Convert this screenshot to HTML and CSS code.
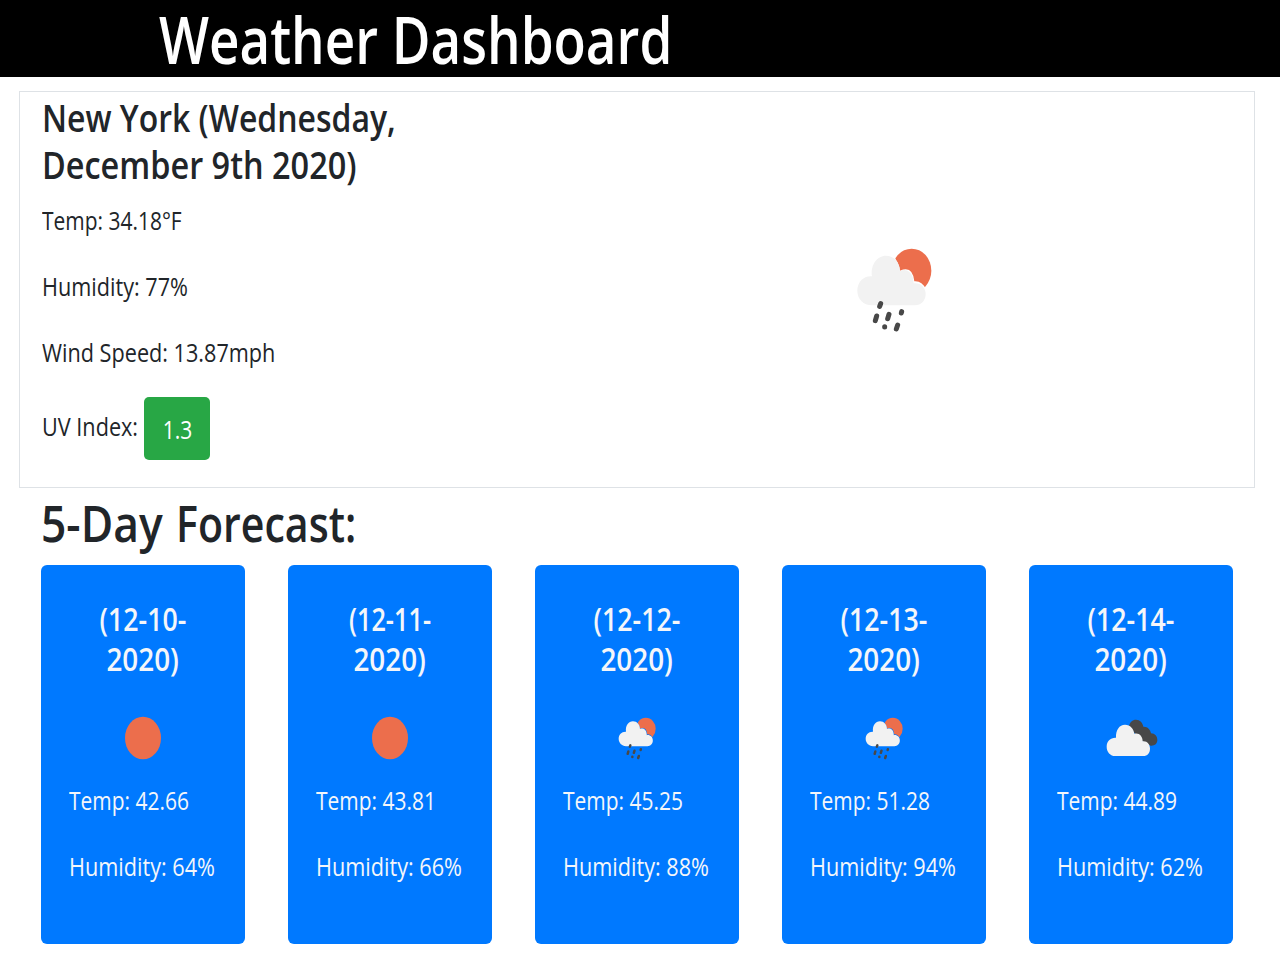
FILE: index.html
```html
<!DOCTYPE html>
<html lang="en">
<head>
<meta charset="utf-8">
<title>Weather Dashboard</title>
<link rel="stylesheet" href="styles.css">
</head>
<body>
<svg class="defs" width="0" height="0">
  <symbol id="rain" viewBox="0 0 330 330">
    <ellipse cx="215" cy="107" rx="59" ry="66" fill="#ec6e4c"/>
    <path class="bg-cut" d="M150 50Q178 82 180 107Q218 90 223 139Q246 137 257 162V182H140Z"/>
    <path d="M96 211C70 211 52 191 52 167C52 141 71 122 96 124C91 90 111 62 138 62C162 62 179 81 180 108C202 98 221 115 221 145C241 142 257 157 257 177C257 197 243 211 225 211Z" fill="#f2f2f2"/>
    <g stroke="#484848" stroke-width="15" stroke-linecap="round"><path d="M122 206L119 214M110 243L106 257M147 238L143 251M185 230L184 234M134 275L134 276M173 270L169 282"/></g>
  </symbol>
  <symbol id="sun" viewBox="0 0 55 55"><ellipse cx="27" cy="27" rx="18" ry="21.3" fill="#ec6e4c"/></symbol>
  <symbol id="clouds" viewBox="0 0 240 210">
    <path d="M117 78C120 66 127 59 138 59C150 59 158 68 160 80C172 79 181 88 183 100C195 100 202 109 202 120C202 131 194 138 182 137L150 120Z" fill="#484848"/>
    <path d="M76 168C61 168 50 156 50 140C50 123 62 112 78 113C77 90 88 74 105 74C121 74 131 86 133 101C147 97 158 108 158 124C171 122 180 133 180 146C180 159 172 168 160 168Z" fill="#f2f2f2"/>
  </symbol>
</svg>
<header class="topbar"><h1><span class="fit fit-title">Weather Dashboard</span></h1></header>
<main class="content">
  <section class="current">
    <div class="details">
      <h2><span class="fit fit-city">New York (Wednesday,</span><br><span class="fit fit-date">December 9th 2020)</span></h2>
      <p><span class="fit fit-temp">Temp: 34.18°F</span></p>
      <p><span class="fit fit-text">Humidity: 77%</span></p>
      <p><span class="fit fit-text">Wind Speed: 13.87mph</span></p>
      <div class="uv"><span class="uv-label"><span class="fit fit-text">UV Index:</span></span><span class="badge"><span class="fit">1.3</span></span></div>
    </div>
    <div class="picture"><svg width="110" height="110"><use href="#rain"/></svg></div>
  </section>
  <h2 class="forecast-title"><span class="fit fit-day">5-Day</span> <span class="fit fit-forecast">Forecast:</span></h2>
  <section class="cards" id="cards"></section>
</main>
<script src="script.js"></script>
</body>
</html>
```
FILE: styles.css
```css
* { box-sizing: border-box; }
body { margin: 0; background: #fff; color: #212529; font: 25px/40px "Open Sans", "Noto Sans", sans-serif; }
h1, h2, h3, p { margin: 0; }
.defs { display: block; }
.bg-cut { fill: var(--surface, #fff); }

/* Condensed text widths */
.fit { display: inline-block; white-space: nowrap; transform-origin: left center; }
.fit-title { transform: scaleX(.814); }
.fit-city { transform: scaleX(.83); }
.fit-date { transform: scaleX(.843); }
.fit-temp { transform: scaleX(.838); }
.fit-text { transform: scaleX(.866); }
.fit-day { width: 135px; transform: scaleX(.87); }
.fit-forecast { transform: scaleX(.806); }

.topbar { height: 77px; background: #000; color: #fff; padding-left: 159px; }
.topbar h1 { font-size: 65px; line-height: 79px; font-weight: 600; }
.content { padding: 14px 25px 0 19px; }
.current { display: flex; height: 397px; border: 1px solid #dee2e6; padding: 2px 22px; }
.details { width: 500px; }
.details h2 { font-size: 38.5px; line-height: 47px; font-weight: 600; margin-bottom: 12px; }
.details p { margin-bottom: 26px; }
.uv { display: flex; gap: 6px; margin-top: -1px; }
.uv-label { width: 96px; padding-top: 9px; }
.badge { width: 66px; height: 63px; margin-top: .4px; background: #28a745; color: #fff; border-radius: 5px; text-align: center; line-height: 65px; padding-left: 1px; }
.badge .fit { transform: scaleX(.84); transform-origin: center; }
.picture { padding: 141px 0 0 298px; }
.forecast-title { display: flex; font-size: 51px; line-height: 68px; font-weight: 600; padding-left: 22px; height: 77px; }
.cards { display: grid; grid-template-columns: repeat(5, 204px); column-gap: 43px; padding-left: 22px; }
.card { --surface: #0079ff; height: 379px; background: #0079ff; color: #f4f6fa; border-radius: 6px; padding: 34px 28px 0; }
.card h3 { font-size: 32px; line-height: 40px; font-weight: 600; text-align: center; margin-bottom: 32px; }
.card h3 .fit { transform: scaleX(.835); transform-origin: center; }
.card h3 .fit-11 { transform: scaleX(.79); }
.card h3 .fit-year { transform: scaleX(.87); }
.card p { margin-bottom: 26px; }
.icon { display: flex; justify-content: center; height: 69px; }
.icon-clouds { margin: -11px 2px 0 0; }
```
FILE: script.js
```javascript
const days = [
  ["10", "sun", "42.66", "64%"],
  ["11", "sun", "43.81", "66%"],
  ["12", "rain", "45.25", "88%"],
  ["13", "rain", "51.28", "94%"],
  ["14", "clouds", "44.89", "62%"]
];
document.getElementById("cards").innerHTML = days.map(([d, icon, temp, hum]) => `
  <article class="card">
    <h3><span class="fit fit-${d}">(12-${d}-</span><br><span class="fit fit-year">2020)</span></h3>
    <div class="icon"><svg class="icon-${icon}" width="${icon === "clouds" ? 80 : 55}" height="${icon === "clouds" ? 70 : 55}"><use href="#${icon}"/></svg></div>
    <p><span class="fit fit-temp">Temp: ${temp}</span></p>
    <p><span class="fit fit-text">Humidity: ${hum}</span></p>
  </article>`).join("");
```
